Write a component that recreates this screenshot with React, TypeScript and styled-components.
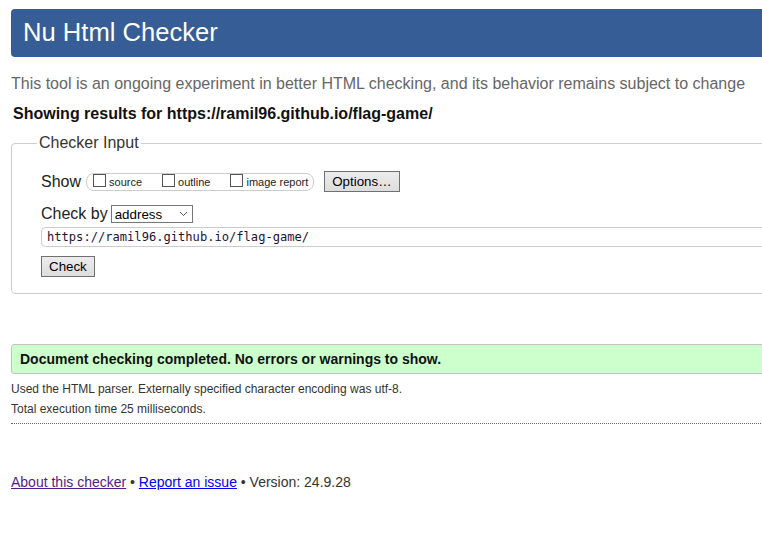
import React from "react";
import styled, { createGlobalStyle } from "styled-components";

const GlobalStyle = createGlobalStyle`
  html, body {
    margin: 0;
    padding: 0;
    overflow: hidden;
    background: #fff;
  }
  body {
    font-family: "Liberation Sans", Arial, sans-serif;
    color: #000;
  }
`;

const Page = styled.div`
  width: 800px;
  padding: 9px 0 40px 11px;
`;

const Header = styled.h1`
  margin: 0;
  height: 48px;
  line-height: 46px;
  padding-left: 12px;
  background: #365d95;
  border-radius: 4px;
  color: #fff;
  font-size: 25.6px;
  font-weight: normal;
`;

const Intro = styled.p`
  margin: 17px 0 0;
  font-size: 16px;
  line-height: 20px;
  color: #666;
`;

const Results = styled.p`
  margin: 10px 0 0;
  padding-left: 2px;
  font-size: 16px;
  line-height: 20px;
  font-weight: bold;
  color: #111;
`;

const Fieldset = styled.fieldset`
  margin: 10px 0 0;
  padding: 0 0 16px 29px;
  border: 1px solid #ccc;
  border-radius: 4px;
  min-width: 0;
`;

const Legend = styled.legend`
  margin-left: -4px;
  padding: 0 2px;
  font-size: 16px;
  line-height: 18px;
  color: #333;
`;

const Row = styled.div<{ $top: number; $height: number }>`
  display: flex;
  align-items: center;
  height: ${(p) => p.$height}px;
  margin-top: ${(p) => p.$top}px;
  font-size: 16px;
  color: #222;
`;

const Pill = styled.span`
  display: inline-flex;
  align-items: center;
  height: 16px;
  margin-left: 5px;
  padding: 0 5px 0 6px;
  border: 1px solid #ccc;
  border-radius: 8px;
`;

const Option = styled.label`
  display: inline-flex;
  align-items: center;
  font-size: 11px;
  color: #222;
  & + & {
    margin-left: 20px;
  }
`;

const Box = styled.input`
  appearance: none;
  width: 13px;
  height: 13px;
  margin: 0 3px 2px 0;
  border: 1px solid #555;
  background: #fff;
`;

const Button = styled.button<{ $left?: number }>`
  height: 21px;
  margin-left: ${(p) => p.$left ?? 0}px;
  padding: 0 7px;
  font-family: "Liberation Sans", Arial, sans-serif;
  font-size: 13.33px;
  color: #000;
  background: linear-gradient(#ececec, #dddddd);
  border: 1px solid #707070;
  border-radius: 0;
`;

const SelectBox = styled.div`
  display: flex;
  align-items: center;
  justify-content: space-between;
  width: 82px;
  height: 18px;
  margin-left: 3px;
  padding: 0 4px 0 3px;
  box-sizing: border-box;
  border: 1px solid #767676;
  font-size: 13.33px;
  color: #000;
`;

const UrlField = styled.div`
  margin-top: 3px;
  height: 20px;
  box-sizing: border-box;
  padding-left: 5px;
  border: 1px solid #ccc;
  border-right: none;
  border-radius: 5px 0 0 5px;
  font-family: "DejaVu Sans Mono", "Liberation Mono", monospace;
  font-size: 12.1px;
  line-height: 18px;
  color: #1e1236;
`;

const ButtonRow = styled.div`
  margin-top: 9px;
  display: flex;
`;

const Success = styled.div`
  margin-top: 50px;
  height: 30px;
  box-sizing: border-box;
  padding-left: 8px;
  display: flex;
  align-items: center;
  background: #ccffcc;
  border: 1px solid #c2c2c2;
  border-radius: 3px;
  font-size: 14px;
  font-weight: bold;
  color: #111;
`;

const Note = styled.p<{ $top: number }>`
  margin: ${(p) => p.$top}px 0 0;
  font-size: 12px;
  line-height: 20px;
  color: #333;
`;

const Rule = styled.hr`
  margin: 4px 0 0;
  border: none;
  border-top: 1px dotted #666;
`;

const Footer = styled.p`
  margin: 48px 0 0;
  font-size: 14px;
  line-height: 20px;
  color: #333;
`;

const Link = styled.a<{ $visited?: boolean }>`
  color: ${(p) => (p.$visited ? "#551a8b" : "#0000ee")};
  text-decoration: underline;
`;

const Chevron = () => (
  <svg width="9" height="6" viewBox="0 0 9 6" fill="none">
    <path d="M1 1l3.5 3.5L8 1" stroke="#555" strokeWidth="1" />
  </svg>
);

export default function App() {
  return (
    <>
      <GlobalStyle />
      <Page>
        <Header>Nu Html Checker</Header>
        <Intro>
          This tool is an ongoing experiment in better HTML checking, and its
          behavior remains subject to change
        </Intro>
        <Results>Showing results for https://ramil96.github.io/flag-game/</Results>
        <Fieldset>
          <Legend>Checker Input</Legend>
          <Row $top={19} $height={21}>
            Show
            <Pill>
              <Option>
                <Box type="checkbox" />
                source
              </Option>
              <Option>
                <Box type="checkbox" />
                outline
              </Option>
              <Option>
                <Box type="checkbox" />
                image report
              </Option>
            </Pill>
            <Button $left={10}>Options…</Button>
          </Row>
          <Row $top={12} $height={20}>
            Check by
            <SelectBox>
              address
              <Chevron />
            </SelectBox>
          </Row>
          <UrlField>https://ramil96.github.io/flag-game/</UrlField>
          <ButtonRow>
            <Button>Check</Button>
          </ButtonRow>
        </Fieldset>
        <Success>Document checking completed. No errors or warnings to show.</Success>
        <Note $top={5}>
          Used the HTML parser. Externally specified character encoding was utf-8.
        </Note>
        <Note $top={0}>Total execution time 25 milliseconds.</Note>
        <Rule />
        <Footer>
          <Link href="#about" $visited>
            About this checker
          </Link>{" "}
          •{" "}
          <Link href="#issue">Report an issue</Link> • Version: 24.9.28
        </Footer>
      </Page>
    </>
  );
}
